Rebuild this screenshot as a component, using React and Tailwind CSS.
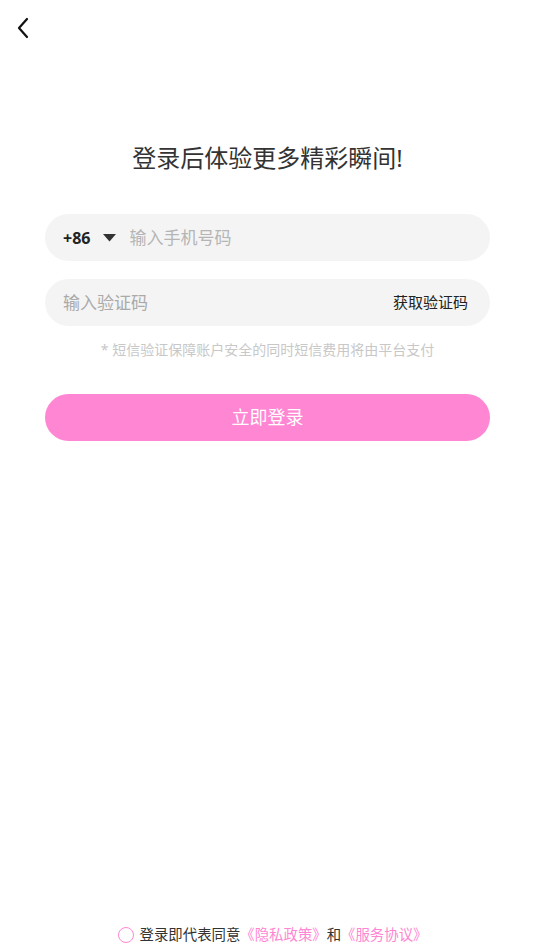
export default function App() {
  return (
    <div className="w-[535px] h-[951px] bg-white flex flex-col" style={{ fontFamily: '"Noto Sans", "Noto Sans CJK SC", sans-serif' }}>
      <div className="h-[56px] pl-[15px] pt-[17px]">
        <svg width="18" height="22" viewBox="0 0 18 22" fill="none">
          <path d="M12 2 L4 11 L12 20" stroke="#111" strokeWidth="2.2" strokeLinecap="round" strokeLinejoin="round" />
        </svg>
      </div>
      <div className="mt-[84px] text-center text-[24px] leading-[36px] text-[#333]">登录后体验更多精彩瞬间!</div>
      <div className="mx-[45px] mt-[38px] flex flex-col">
        <div className="h-[47px] rounded-full bg-[#f4f4f4] flex items-center pl-[18px]">
          <span className="text-[16px] font-bold text-[#222]">+86</span>
          <svg className="ml-[13px]" width="13" height="8" viewBox="0 0 13 8">
            <path d="M0 0 H13 L6.5 7.5 Z" fill="#333" />
          </svg>
          <span className="ml-[13px] text-[17px] text-[#b5b5b5]">输入手机号码</span>
        </div>
        <div className="mt-[18px] h-[47px] rounded-full bg-[#f4f4f4] flex items-center justify-between pl-[18px] pr-[22px]">
          <span className="text-[17px] text-[#aaaaaa]">输入验证码</span>
          <span className="text-[15px] text-[#222]">获取验证码</span>
        </div>
        <div className="mt-[13px] text-center text-[14px] text-[#c8c8c8]">* 短信验证保障账户安全的同时短信费用将由平台支付</div>
        <div className="mt-[34px] h-[47px] rounded-full bg-[#ff86d3] flex items-center justify-center text-white text-[18px]">立即登录</div>
      </div>
      <div className="flex-1" />
      <div className="flex items-end justify-center pb-[5px] pl-[10px]">
        <div className="flex items-center text-[14.4px] text-[#333]">
          <span className="w-[16px] h-[16px] rounded-full border-[1.5px] border-[#ff86d3] mr-[6px]" />
          <span>登录即代表同意</span>
          <span className="text-[#ff86d3]">《隐私政策》</span>
          <span>和</span>
          <span className="text-[#ff86d3]">《服务协议》</span>
        </div>
      </div>
    </div>
  );
}
